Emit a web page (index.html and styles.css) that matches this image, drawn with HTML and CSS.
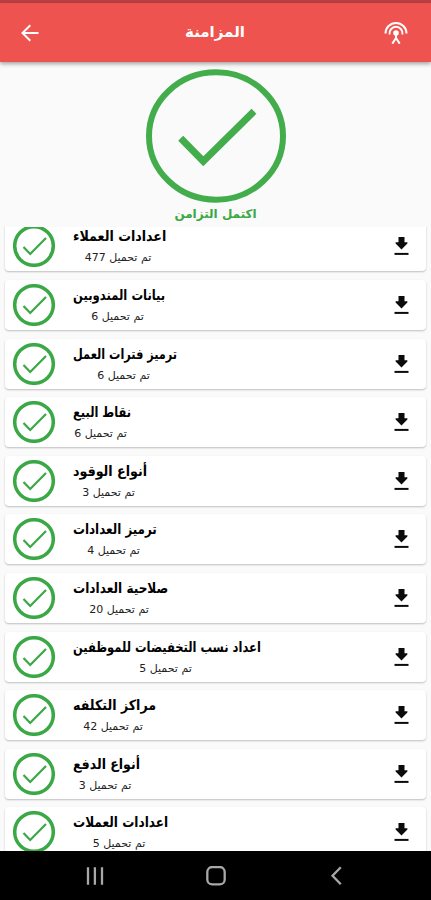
FILE: index.html
```html
<!DOCTYPE html>
<html lang="ar">
<head>
  <meta charset="UTF-8" />
  <meta name="viewport" content="width=device-width, initial-scale=1.0" />
  <title>المزامنة</title>
  <link rel="stylesheet" href="styles.css">
</head>
<body>
  <svg class="icon-defs" width="0" height="0">
    <symbol id="check" viewBox="0 0 42 42">
      <circle cx="21" cy="21" r="19.3" fill="none" stroke="#3aa845" stroke-width="3.5" />
      <path d="M10.5 22 L17.2 29 L33 13" fill="none" stroke="#3aa845" stroke-width="2.2" />
    </symbol>
    <symbol id="download" viewBox="0 0 15 18">
      <path d="M4.5 0 H10.5 V5.2 H13.4 V6.4 L7.5 12.6 L1.6 6.4 V5.2 H4.5 Z" fill="#0b0b0b" />
      <path d="M.5 16.9 H14.5" stroke="#0b0b0b" stroke-width="2" />
    </symbol>
  </svg>

  <div class="status-bar"></div>
  <header class="app-bar">
    <svg class="back" width="18" height="18" viewBox="0 0 18 18">
      <path d="M17.5 9 H2 M9.3 1.3 L1.5 9 L9.3 16.7" />
    </svg>
    <h1>المزامنة</h1>
    <svg class="antenna" width="24" height="24" viewBox="0 0 24 24">
      <path d="M1.5 12.5 A10.5 10.5 0 0 1 22.5 12.5" />
      <path d="M5.6 13.5 A6.5 6.5 0 1 1 18.4 13.5" />
      <path d="M12 12 V18 M12 17 L8.3 22.6 M12 17 L15.7 22.6" />
      <circle cx="12" cy="12" r="2.8" />
    </svg>
  </header>

  <section class="summary">
    <svg width="140" height="134" viewBox="0 0 140 134">
      <ellipse cx="70" cy="67" rx="67" ry="63.7" />
      <path d="M34.7 69.3 L57.3 92.3 L108 42.2" />
    </svg>
    <p dir="rtl">اكتمل التزامن</p>
  </section>

  <main class="sync-list" id="syncList"></main>

  <nav class="nav-bar">
    <svg width="20" height="20" viewBox="0 0 20 20"><path d="M3 1.2 V18.8 M9.9 1.2 V18.8 M17 1.2 V18.8" /></svg>
    <svg width="20" height="20" viewBox="0 0 20 20"><rect x="1.3" y="1" width="17.4" height="17.4" rx="5" /></svg>
    <svg width="20" height="20" viewBox="0 0 20 20"><path d="M14.8 1.2 L6.5 9.7 L14.8 18.2" /></svg>
  </nav>

  <script>
    // title, downloaded records, title width
    const items = [
      ["اعدادات العملاء", 477, 93],
      ["بيانات المندوبين", 6, 92],
      ["ترميز فترات العمل", 6, 104],
      ["نقاط البيع", 6, 58],
      ["أنواع الوقود", 3, 74],
      ["ترميز العدادات", 4, 84],
      ["صلاحية العدادات", 20, 95],
      ["اعداد نسب التخفيضات للموظفين", 5, 188],
      ["مراكز التكلفه", 42, 83],
      ["أنواع الدفع", 3, 67],
      ["اعدادات العملات", 5, 95]
    ];

    document.getElementById("syncList").innerHTML = items.map(([title, count, width]) => `
      <div class="card">
        <svg class="check"><use href="#check" /></svg>
        <div class="info" dir="rtl" style="width: ${width}px">
          <h2><span>${title}</span></h2>
          <p>تم تحميل ${count}</p>
        </div>
        <svg class="download"><use href="#download" /></svg>
      </div>`).join("");

    // condense each title to its column
    document.querySelectorAll(".info h2 span").forEach(span => {
      const width = span.closest(".info").clientWidth;
      span.style.transform = `scaleX(${width / span.offsetWidth})`;
    });
  </script>
</body>
</html>
```
FILE: styles.css
```css
* {
  box-sizing: border-box;
}

body {
  margin: 0;
  height: 900px;
  display: flex;
  flex-direction: column;
  overflow: hidden;
  background-color: #fafafa;
  font-family: "DejaVu Sans", sans-serif;
}

h1, h2, p {
  margin: 0;
  white-space: nowrap;
}

.icon-defs {
  position: absolute;
}

.status-bar {
  flex: none;
  height: 3px;
  background-color: #b94040;
}

.app-bar {
  flex: none;
  height: 59px;
  padding: 0 23px 0 21px;
  display: flex;
  align-items: center;
  justify-content: space-between;
  background-color: #ef5350;
  box-shadow: 0 2px 4px rgba(0, 0, 0, 0.35);
}

.app-bar h1 {
  padding: 0 0 2px 7px;
  font-size: 15px;
  line-height: 20px;
  color: #fff;
}

.app-bar svg {
  fill: none;
  stroke: #fff;
  stroke-width: 2;
}

.app-bar .antenna {
  stroke-width: 2;
}

.app-bar .antenna circle {
  fill: #fff;
  stroke: none;
}

.summary {
  flex: none;
  height: 165px;
  padding-top: 7px;
  text-align: center;
}

.summary svg {
  display: block;
  margin: 0 auto;
  fill: none;
  stroke: #43ad4c;
  stroke-width: 6;
}

.summary path {
  stroke-width: 7;
}

.summary p {
  margin-top: 3px;
  font-size: 12px;
  line-height: 16px;
  font-weight: bold;
  color: #3aa845;
}

.sync-list {
  flex: 1;
  min-height: 0;
  overflow: hidden;
  padding: 0 5px;
}

.card {
  height: 50px;
  margin-bottom: 8.6px;
  padding: 0 17px 0 8px;
  display: flex;
  align-items: center;
  background-color: #fff;
  border-radius: 4px;
  box-shadow: 0 1px 2px rgba(0, 0, 0, 0.24);
}

.card:first-child {
  margin-top: -5.6px;
}

.check {
  width: 42px;
  height: 42px;
  flex: none;
}

.info {
  flex: none;
  margin-left: 18px;
  text-align: center;
  color: #000;
}

.info h2 {
  font-size: 14px;
  line-height: 24px;
}

.info h2 span {
  display: inline-block;
  transform-origin: right;
}

.info p {
  padding-right: 3px;
  font-size: 11px;
  line-height: 20px;
  color: #222;
}

.download {
  width: 15px;
  height: 18px;
  margin-left: auto;
  flex: none;
}

.nav-bar {
  flex: none;
  height: 49px;
  padding: 0 85px;
  display: flex;
  align-items: center;
  justify-content: space-between;
  background-color: #000;
}

.nav-bar svg {
  fill: none;
  stroke: #a8a8a8;
  stroke-width: 2.3;
}
```
